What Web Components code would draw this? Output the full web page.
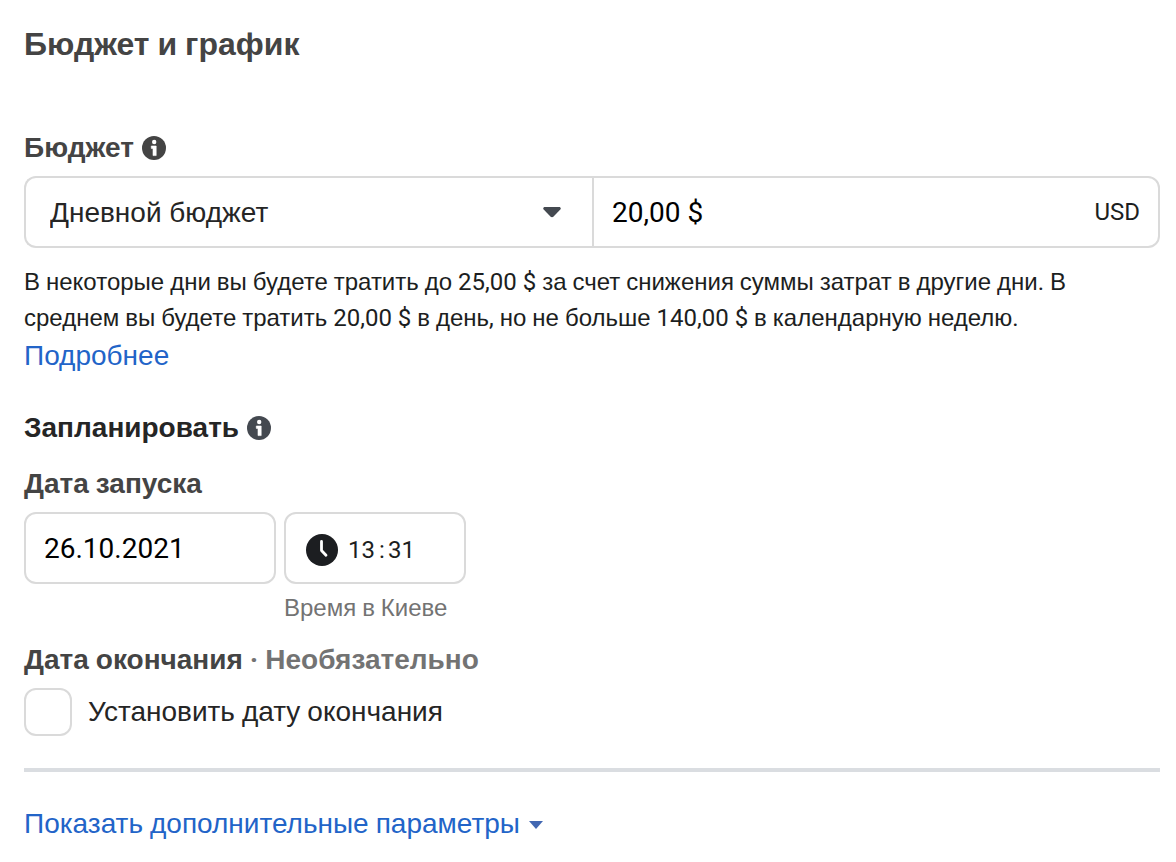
<!DOCTYPE html>
<html lang="ru">
<head>
<meta charset="utf-8">
<title>Бюджет и график</title>
<style>
  body {
    background: #fff;
    color: #1c1e21;
    font-family: Roboto, sans-serif;
    font-size: 28px;
    line-height: 40px;
    margin: 0;
  }
</style>
</head>
<body>
<budget-schedule></budget-schedule>

<script>
(function() {
  const cyrillic = '"Liberation Sans", Arial, sans-serif';

  // NOTE: digits, latin and spaces stay in Roboto, cyrillic words get their own face
  const ru = text =>
    text.replace(/[а-яё]+/gi, word => `<span class="ru">${word}</span>`);
  const ruStyle = `.ru { font-family: ${cyrillic}; line-height: 1; }`;

  class InfoIcon extends HTMLElement {
    constructor() {
      super();
      this.attachShadow({mode: 'open'});
    }

    connectedCallback() {
      this.shadowRoot.innerHTML =
        `<style>
          :host {
            display: block;
            height: 24px;
            width: 24px;
          }
          svg {
            display: block;
          }
        </style>
        <svg width="24" height="24" viewBox="0 0 24 24" aria-hidden="true">
          <circle cx="12" cy="12" r="12" fill="currentColor"/>
          <circle cx="12.2" cy="6" r="2.2" fill="#fff"/>
          <path d="M9.300 10h4.900v9.600h-3.200v-7.200H9.300z" fill="#fff" stroke="#fff" stroke-width=".6" stroke-linejoin="round"/>
        </svg>`;
    }
  }

  class FieldLabel extends HTMLElement {
    constructor() {
      super();
      this.attachShadow({mode: 'open'});
    }

    connectedCallback() {
      this.shadowRoot.innerHTML =
        `<style>
          :host {
            align-items: center;
            color: #444;
            display: flex;
            font-weight: bold;
            gap: 8px;
          }
          :host([tone='dark']) {
            color: #252525;
          }
          info-icon {
            color: #444;
          }
          :host([tone='dark']) info-icon {
            color: #444950;
          }
        </style>
        <div><slot></slot></div>
        ${this.hasAttribute('info') ? '<info-icon></info-icon>' : ''}`;
    }
  }

  class BudgetField extends HTMLElement {
    constructor() {
      super();
      this.attachShadow({mode: 'open'});
    }

    connectedCallback() {
      this.shadowRoot.innerHTML =
        `<style>
          :host {
            display: grid;
            grid-template-columns: 1fr 1fr;
          }
          .type, .amount {
            align-items: center;
            border: 2px solid #dadada;
            box-sizing: border-box;
            display: flex;
            height: 72px;
          }
          .type {
            border-radius: 12px 0 0 12px;
            border-right: 0;
            display: grid;
            padding-left: 24px;
          }
          .amount {
            border-radius: 0 12px 12px 0;
            padding: 0 18px;
          }
          select, input {
            background: none;
            border: 0;
            font: inherit;
            padding: 2px 0 0;
          }
          select, svg {
            grid-area: 1 / 1;
          }
          select {
            appearance: none;
            color: #252525;
            font-family: ${cyrillic};
            width: 100%;
          }
          svg {
            justify-self: end;
            margin-right: 31px;
            pointer-events: none;
          }
          input {
            color: #000;
            flex: 1;
            min-width: 0;
          }
          .currency {
            font-size: 24px;
            line-height: 36px;
          }
        </style>
        <div class="type">
          <select aria-label="Тип бюджета"><option>Дневной бюджет</option></select>
          <svg width="18" height="12" viewBox="0 0 18 12" aria-hidden="true">
            <path d="M1.200 1h15.600q1.700 1 .5 2.600l-6.700 6.900q-1.600 1.300-3.200 0L.7 3.600Q-.5 2 1.200 1z" fill="#444950"/>
          </svg>
        </div>
        <div class="amount">
          <input type="text" value="20,00 $" aria-label="Сумма">
          <span class="currency">USD</span>
        </div>`;
    }
  }

  class StartDate extends HTMLElement {
    constructor() {
      super();
      this.attachShadow({mode: 'open'});
    }

    connectedCallback() {
      this.shadowRoot.innerHTML =
        `<style>
          ${ruStyle}
          :host {
            align-items: start;
            display: flex;
            gap: 8px;
          }
          input {
            background: none;
            border: 0;
            color: inherit;
            font: inherit;
            padding: 0;
          }
          .date, .time {
            border: 2px solid #dadada;
            border-radius: 12px;
            box-sizing: border-box;
            height: 72px;
          }
          .date {
            color: #000;
            padding: 0 18px;
            width: 252px;
          }
          .time {
            align-items: center;
            display: flex;
            font-size: 24px;
            line-height: 36px;
            padding: 4px 20px 0;
            width: 182px;
          }
          .time svg {
            margin-right: 10px;
          }
          .time input {
            width: 28px;
          }
          .colon {
            text-align: center;
            width: 12px;
          }
          .hint {
            color: #737373;
            font-size: 24px;
            line-height: 32px;
            margin-top: 8px;
          }
        </style>
        <input class="date" type="text" value="26.10.2021" aria-label="Дата запуска">
        <div>
          <div class="time">
            <svg width="32" height="32" viewBox="0 0 32 32" aria-hidden="true">
              <circle cx="16" cy="16" r="16" fill="#1c1e21"/>
              <path d="M15.500 7.500v9l4.500 4.800" fill="none" stroke="#fff" stroke-width="2.800" stroke-linecap="round" stroke-linejoin="round"/>
            </svg>
            <input type="text" value="13" aria-label="Часы">
            <span class="colon">:</span>
            <input type="text" value="31" aria-label="Минуты">
          </div>
          <div class="hint">${ru('Время в Киеве')}</div>
        </div>`;
    }
  }

  class CheckField extends HTMLElement {
    constructor() {
      super();
      this.attachShadow({mode: 'open'});
    }

    connectedCallback() {
      this.shadowRoot.innerHTML =
        `<style>
          :host {
            display: block;
          }
          label {
            align-items: center;
            color: #252525;
            display: flex;
            gap: 16px;
          }
          input {
            appearance: none;
            border: 2px solid #dadada;
            border-radius: 12px;
            box-sizing: border-box;
            height: 48px;
            margin: 0;
            width: 48px;
          }
          input:checked {
            background: #216fdb;
          }
        </style>
        <label><input type="checkbox"><span><slot></slot></span></label>`;
    }
  }

  class BudgetSchedule extends HTMLElement {
    constructor() {
      super();
      this.attachShadow({mode: 'open'});
    }

    connectedCallback() {
      this.shadowRoot.innerHTML =
        `<style>
          ${ruStyle}
          :host {
            display: block;
            padding: 24px 16px 16px 24px;
          }
          h1 {
            color: #444;
            font-size: 32px;
            line-height: 40px;
            margin: 0 0 64px;
          }
          p {
            font-size: 24px;
            line-height: 36px;
            margin: 16px 0 0;
          }
          a {
            color: #2264c8;
            text-decoration: none;
          }
          .more {
            display: block;
            margin-bottom: 32px;
          }
          field-label {
            margin-bottom: 8px;
          }
          field-label[tone='dark'],
          start-date {
            margin-bottom: 16px;
          }
          .optional {
            color: #737373;
          }
          hr {
            background: #dadde1;
            border: 0;
            height: 4px;
            margin: 32px 0;
          }
          .params {
            align-items: center;
            display: flex;
            gap: 8px;
          }
        </style>
        <h1>${ru('Бюджет и график')}</h1>
        <field-label info>${ru('Бюджет')}</field-label>
        <budget-field></budget-field>
        <p>${ru('В некоторые дни вы будете тратить до 25,00 $ за счет снижения суммы затрат в другие дни. В среднем вы будете тратить 20,00 $ в день, но не больше 140,00 $ в календарную неделю.')}</p>
        <a class="more" href="#">${ru('Подробнее')}</a>
        <field-label tone="dark" info>${ru('Запланировать')}</field-label>
        <field-label>${ru('Дата запуска')}</field-label>
        <start-date></start-date>
        <field-label>${ru('Дата окончания')} <span class="optional">· ${ru('Необязательно')}</span></field-label>
        <check-field>${ru('Установить дату окончания')}</check-field>
        <hr>
        <a class="params" href="#">
          <span>${ru('Показать дополнительные параметры')}</span>
          <svg width="16" height="10" viewBox="0 0 16 10" aria-hidden="true">
            <path d="M1 2h14L8 10z" fill="#4267b2"/>
          </svg>
        </a>`;
    }
  }

  customElements.define('info-icon', InfoIcon);
  customElements.define('field-label', FieldLabel);
  customElements.define('budget-field', BudgetField);
  customElements.define('start-date', StartDate);
  customElements.define('check-field', CheckField);
  customElements.define('budget-schedule', BudgetSchedule);
}());
</script>
</body>
</html>
